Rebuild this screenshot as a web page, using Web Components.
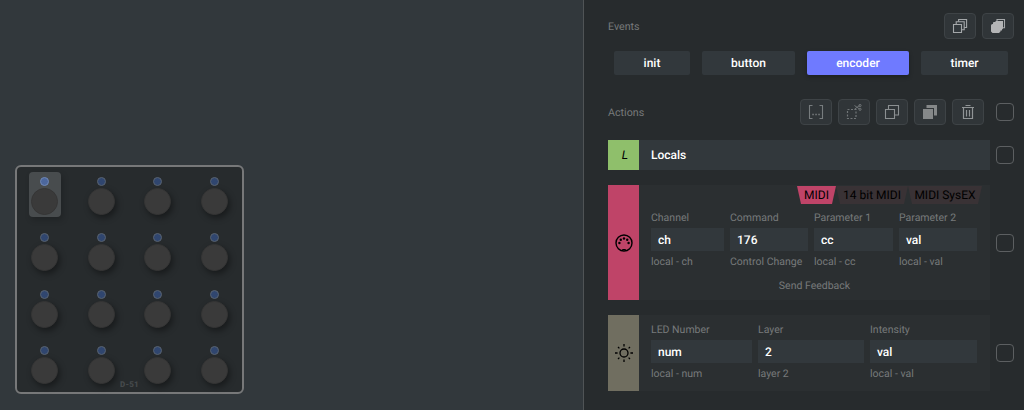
<!DOCTYPE html>
<html lang="en">
<head>
<meta charset="utf-8">
<title>Grid Editor</title>
<style>
html,body{margin:0;height:100%;overflow:hidden;background:#272b2d}
body{font-family:Roboto,"Liberation Sans",sans-serif;font-size:12px;color:#fff;text-rendering:geometricPrecision}
</style>
</head>
<body>
<grid-editor></grid-editor>
<script>
const define = (name, html) => customElements.define(name, class extends HTMLElement {
  connectedCallback() {
    if (this.shadowRoot) return;
    this.attachShadow({mode: 'open'}).innerHTML = typeof html === 'function' ? html(this) : html;
  }
});

const icons = {
  layers: '<g fill="#32383c" stroke="#a4a7a9" stroke-width="1.1"><path d="M6.6 1.5h8v8h-8z"/><path d="M4.2 3.7h8v8h-8z"/><path d="M1.5 6.5h8v8h-8z"/></g>',
  layersFill: '<path d="M7 3V1.5h7.5v8.3H13" fill="none" stroke="#a4a7a9" stroke-width="1.1"/><path d="M1 7.5Q1 6 2.5 6H3V5q0-1 1-1h1.5V3H13v7.5l-1 1v1h-1.5v1L9 15H2.5L1 13.5z" fill="#b4b5b6"/>',
  merge: '<path d="M4.5 1.5h-3v13h3M11.5 1.5h3v13h-3" fill="none" stroke="#777c7e" stroke-width="1.1"/><path d="M4.3 10.5h1.5M7.3 10.5h1.5M10.3 10.5h1.5" stroke="#777c7e" stroke-width="1.3"/>',
  cut: '<path d="M1.5 5.5h8.5v9H1.5z" fill="none" stroke="#707577" stroke-width="1.2" stroke-dasharray="2 1.5"/><path d="M8.5 1.5l5 3.5M8.5 5.2l5-3.7" stroke="#707577" fill="none"/><circle cx="14" cy="1.5" r="1.1" fill="none" stroke="#707577"/><circle cx="14" cy="5.3" r="1.1" fill="none" stroke="#707577"/>',
  copy: '<g fill="none" stroke="#8b8f91" stroke-width="1.1"><path d="M1.5 5.5h9v9h-9z"/><path d="M4.5 5V1.5h10v9.5H11"/></g>',
  paste: '<path d="M4.5 1H15v10.5h-3V4H4.5z" fill="#858889"/><path d="M1 5h10v10H1z" fill="#858889"/>',
  trash: '<g fill="none" stroke="#909496" stroke-width="1.2"><path d="M2 3.5h12M5.5 1.5h5M3.5 4v10.5h9V4M6.5 6v6.5M9.5 6v6.5"/></g>'
};

define('encoder-knob', `<style>
:host{display:flex;justify-content:center;box-sizing:border-box;padding-top:5.2px}
div{display:flex;flex-direction:column;align-items:center;width:32px;height:45px;border-radius:4px;box-sizing:border-box;padding-top:4.4px}
:host([selected]) div{background:#484c4e;box-shadow:2px 3px 6px #0003}
i{width:7px;height:7px;border:1.5px solid #59636f;border-radius:50%;background:#30466f}
:host([selected]) i{background:#4c679d;border-color:#7088b5}
b{width:25px;height:25px;margin-top:2px;border:1px solid #353535;border-radius:50%;background:#3a3a3a;box-shadow:2px 3px 6px #0006}
:host([selected]) b{box-shadow:none}
</style><div><i></i><b></b></div>`);

define('grid-module', () => `<style>
:host{display:block;box-sizing:border-box;width:229px;height:229px;border:2px solid #777879;border-radius:6px;background:#272b2d;position:relative}
main{display:grid;grid-template:repeat(4,56.5px)/repeat(4,56.5px);margin-left:-.5px}
span{position:absolute;left:0;right:0;bottom:2px;text-align:center;font:900 8px/10px Roboto;letter-spacing:.2px;color:#45494b}
</style><main>${Array.from({length:16},(_, i) => `<encoder-knob${i ? '' : ' selected'}></encoder-knob>`).join('')}</main><span>D-51</span>`);

define('icon-button', el => `<style>
:host{display:flex;align-items:center;justify-content:center;box-sizing:border-box;width:32px;height:26px;border:1px solid #3e4346;border-radius:4px;background:#303538}
svg{display:block}
</style><svg width="16" height="16" viewBox="0 0 16 16">${icons[el.getAttribute('icon')]}</svg>`);

define('check-box', `<style>:host{display:block;box-sizing:border-box;width:18px;height:18px;border:1px solid #5c5f61;border-radius:4px;flex:none}</style>`);

define('event-tab', `<style>
:host{display:flex;align-items:center;justify-content:center;height:24px;border-radius:2px;background:#32383c;font-weight:500}
:host([active]){background:#6f7aff;box-shadow:0 2px 4px #0004}
</style><slot></slot>`);

define('section-head', `<style>
:host{display:flex;align-items:center;height:26px;gap:6px;color:#777a7b;font-size:10.7px}
span{flex:1}
</style><span><slot name="title"></slot></span><slot></slot>`);

define('value-field', el => `<style>
:host{display:block;min-width:0;color:#777a7b}
label,small{display:block;height:16px;line-height:16px;font-size:10.5px;white-space:nowrap}
div{height:23px;line-height:24px;margin:2px 0 3px;padding-left:7px;background:#32383c;color:#fff;font-size:12px;font-weight:500}
</style><label>${el.getAttribute('label')}</label><div>${el.getAttribute('value')}</div><small>${el.getAttribute('hint')}</small>`);

define('mode-tab', `<style>
:host{display:block;height:18px;line-height:19px;text-align:center;background:#393235;color:#000;clip-path:polygon(0 0,100% 0,calc(100% - 4px) 100%,4px 100%)}
:host([active]){background:#bf4468}
</style><slot></slot>`);

define('action-block', `<style>
:host{display:flex;align-items:center;gap:6px;box-sizing:border-box}
article{display:flex;width:382px;height:100%;background:#2b2f31}
:host([plain]) article{background:#32383c}
aside{display:flex;align-items:center;justify-content:center;width:31px;background:var(--accent);color:#000}
section{flex:1;min-width:0}
</style><article><aside><slot name="icon"></slot></aside><section><slot></slot></section></article><check-box></check-box>`);

define('grid-editor', `<style>
:host{display:grid;grid-template-columns:583px 1fr;height:410px}
.canvas{background:#32383c;padding:165px 0 0 15px}
.panel{border-left:1px solid #505456;background:#272b2d;padding:13px 10px 0 24px}
.events{display:grid;grid-template-columns:76px 93px 102px 87px;gap:12px;margin:12px 0 24px 6px}
.locals{height:30px;margin-top:15px;--accent:#8fbf6b}
.midi{height:115px;margin-top:15px;--accent:#bf4468}
.led{height:76px;margin-top:15px;--accent:#706e60}
.name{font-weight:500;line-height:30px;padding-left:12px}
.tabs{display:grid;grid-template-columns:39px 72px 74px;justify-content:end;padding:1px 8px 0 0}
.fields{display:grid;gap:6px;padding:6px 13px 0 12px}
.four{grid-template-columns:73px 78px 79px 78px}
.three{grid-template-columns:101px 106px 107px;padding-top:7px}
.feedback{font-size:10.5px;line-height:16px;margin-top:8px;text-align:center;color:#777a7b}
.l{font-style:italic;font-weight:400;padding-left:3px}
svg{display:block}
</style>
<div class="canvas"><grid-module></grid-module></div>
<div class="panel">
<section-head><span slot="title">Events</span><icon-button icon="layers"></icon-button><icon-button icon="layersFill"></icon-button></section-head>
<div class="events"><event-tab>init</event-tab><event-tab>button</event-tab><event-tab active>encoder</event-tab><event-tab>timer</event-tab></div>
<section-head><span slot="title">Actions</span><icon-button icon="merge"></icon-button><icon-button icon="cut"></icon-button><icon-button icon="copy"></icon-button><icon-button icon="paste"></icon-button><icon-button icon="trash"></icon-button><check-box style="margin-left:6px"></check-box></section-head>
<action-block class="locals" plain><span slot="icon" class="l">L</span><div class="name">Locals</div></action-block>
<action-block class="midi">
<svg slot="icon" width="18" height="18" viewBox="0 0 18 18"><circle cx="9" cy="9" r="8" fill="none" stroke="#000" stroke-width="1.4"/><g><circle cx="9" cy="4.5" r="1.2"/><circle cx="5.8" cy="5.8" r="1.2"/><circle cx="12.2" cy="5.8" r="1.2"/><circle cx="4.4" cy="9" r="1.2"/><circle cx="13.6" cy="9" r="1.2"/></g><path d="M7.5 16.2v-.7h3v.7" fill="none" stroke="#000"/></svg>
<div class="tabs"><mode-tab active>MIDI</mode-tab><mode-tab>14 bit MIDI</mode-tab><mode-tab>MIDI SysEX</mode-tab></div>
<div class="fields four"><value-field label="Channel" value="ch" hint="local - ch"></value-field><value-field label="Command" value="176" hint="Control Change"></value-field><value-field label="Parameter 1" value="cc" hint="local - cc"></value-field><value-field label="Parameter 2" value="val" hint="local - val"></value-field></div>
<div class="feedback">Send Feedback</div>
</action-block>
<action-block class="led">
<svg slot="icon" width="18" height="18" viewBox="0 0 18 18" fill="none" stroke="#000" stroke-width="1.3"><circle cx="9" cy="9" r="4"/><path d="M9 0v2.6M9 15.4V18M0 9h2.6M15.4 9H18M3 3l1.4 1.4M13.6 13.6L15 15M3 15l1.4-1.4M13.6 4.4L15 3"/></svg>
<div class="fields three"><value-field label="LED Number" value="num" hint="local - num"></value-field><value-field label="Layer" value="2" hint="layer 2"></value-field><value-field label="Intensity" value="val" hint="local - val"></value-field></div>
</action-block>
</div>`);
</script>
</body>
</html>
